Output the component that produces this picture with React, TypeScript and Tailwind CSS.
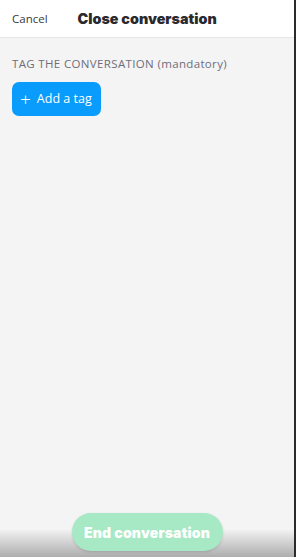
export default function App() {
  return (
    <div className="flex h-[557px] w-[296px] overflow-hidden bg-[#2b2b2b]" style={{ fontFamily: '"Open Sans", sans-serif' }}>
      <div className="relative flex w-[294px] flex-col bg-[#f4f4f4]">
        <header className="flex h-[38px] items-center border-b border-[#e6e6e6] bg-white px-3">
          <button type="button" className="text-[11.5px] text-[#3a3a3a]">
            Cancel
          </button>
          <h1 className="ml-[30px] text-[14.3px] font-black text-[#2a2a2e]" style={{ fontFamily: 'Inter, sans-serif' }}>
            Close conversation
          </h1>
        </header>
        <main className="flex-1 px-3 pt-[17px]">
          <p className="text-[11.5px] tracking-[0.35px] text-[#6e6e7a]">TAG THE CONVERSATION (mandatory)</p>
          <button
            type="button"
            className="mt-[10px] flex h-[34px] items-center gap-[6px] whitespace-nowrap rounded-[7px] bg-[#0a9cfc] pl-[8px] pr-[9px] text-[12.5px] text-white"
          >
            <span className="text-[19px] leading-none font-light">+</span>
            Add a tag
          </button>
        </main>
        <div className="pointer-events-none absolute inset-x-0 bottom-0 h-[28px] bg-gradient-to-b from-[#f4f4f4] to-[#adadad]" />
        <div className="absolute inset-x-0 bottom-[6px] flex justify-center">
          <button
            type="button"
            className="h-[38px] w-[151px] rounded-full bg-[#a6e9c4] text-[14px] font-black tracking-[0.2px] text-white shadow-sm"
            style={{ fontFamily: 'Inter, sans-serif' }}
          >
            End conversation
          </button>
        </div>
      </div>
    </div>
  );
}
